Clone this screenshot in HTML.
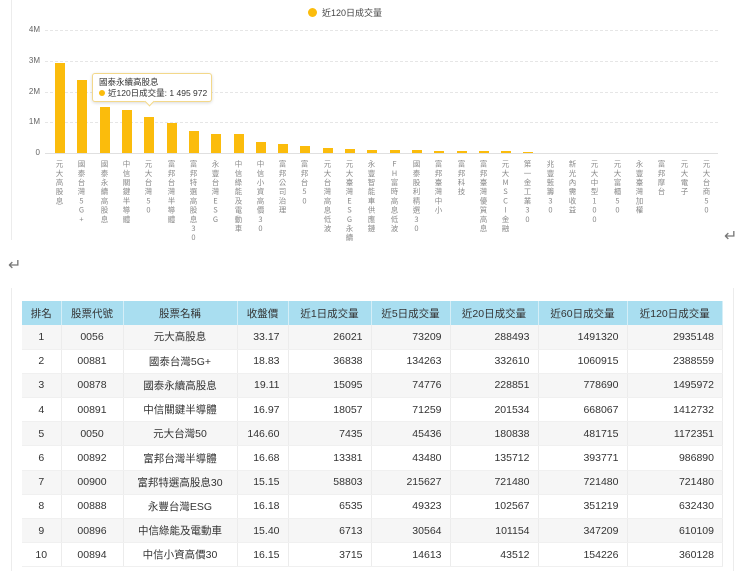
<!DOCTYPE html>
<html><head><meta charset="utf-8"><style>
*{margin:0;padding:0;box-sizing:border-box}
body{width:740px;height:571px;background:#fff;position:relative;overflow:hidden;font-family:"Liberation Sans","Noto Sans CJK TC",sans-serif;color:#333}
.abs{position:absolute}
.yl{position:absolute;left:20px;width:20px;text-align:right;font-size:8px;color:#666}
.gl{position:absolute;left:45px;width:673px;border-top:1px dashed #e6e6e6}
.bar{position:absolute;width:10px;background:#fbbc0c;bottom:418px}
.lab{position:absolute;top:160px;width:10px;font-size:7.5px;letter-spacing:1.7px;color:#8a8a8a;writing-mode:vertical-rl;text-orientation:upright;font-family:"Noto Sans CJK TC","Liberation Sans",sans-serif}
table{position:absolute;left:22px;top:301px;width:701px;border-collapse:collapse;font-size:10.5px}
th{background:#a9def0;height:24px;font-weight:normal;color:#333;border-right:1px solid #d5eef7}
td{height:24.2px;border-right:1px solid #ececec;border-bottom:1px solid #f0f0f0}
tr:nth-child(even) td{background:#f6f6f6}
.c{text-align:center}.r{text-align:right;padding-right:8px}
</style></head><body>
<div class="abs" style="left:11px;top:0;height:240px;border-left:1px solid #ececec"></div>
<div class="abs" style="left:308px;top:8px;width:9px;height:9px;border-radius:50%;background:#fbbc0c"></div>
<div class="abs" style="left:322px;top:6px;font-size:9px;color:#444">近120日成交量</div>
<div class="yl" style="top:25px">4M</div><div class="yl" style="top:56px">3M</div><div class="yl" style="top:87px">2M</div><div class="yl" style="top:117px">1M</div><div class="yl" style="top:148px">0</div>
<div class="gl" style="top:30px"></div><div class="gl" style="top:61px"></div><div class="gl" style="top:92px"></div><div class="gl" style="top:122px"></div>
<div class="abs" style="left:45px;top:153px;width:673px;border-top:1px solid #e0e0e0"></div>
<div class="bar" style="left:55px;height:90px"></div>
<div class="bar" style="left:77px;height:73px"></div>
<div class="bar" style="left:100px;height:46px"></div>
<div class="bar" style="left:122px;height:43px"></div>
<div class="bar" style="left:144px;height:36px"></div>
<div class="bar" style="left:167px;height:30px"></div>
<div class="bar" style="left:189px;height:22px"></div>
<div class="bar" style="left:211px;height:19px"></div>
<div class="bar" style="left:234px;height:19px"></div>
<div class="bar" style="left:256px;height:11px"></div>
<div class="bar" style="left:278px;height:9px"></div>
<div class="bar" style="left:300px;height:7px"></div>
<div class="bar" style="left:323px;height:5px"></div>
<div class="bar" style="left:345px;height:4px"></div>
<div class="bar" style="left:367px;height:3px"></div>
<div class="bar" style="left:390px;height:3px"></div>
<div class="bar" style="left:412px;height:3px"></div>
<div class="bar" style="left:434px;height:2px"></div>
<div class="bar" style="left:457px;height:2px"></div>
<div class="bar" style="left:479px;height:2px"></div>
<div class="bar" style="left:501px;height:2px"></div>
<div class="bar" style="left:523px;height:1px"></div>
<div class="lab" style="left:55px">元大高股息</div>
<div class="lab" style="left:77px">國泰台灣5G+</div>
<div class="lab" style="left:100px">國泰永續高股息</div>
<div class="lab" style="left:122px">中信關鍵半導體</div>
<div class="lab" style="left:144px">元大台灣50</div>
<div class="lab" style="left:167px">富邦台灣半導體</div>
<div class="lab" style="left:189px">富邦特選高股息30</div>
<div class="lab" style="left:211px">永豐台灣ESG</div>
<div class="lab" style="left:234px">中信綠能及電動車</div>
<div class="lab" style="left:256px">中信小資高價30</div>
<div class="lab" style="left:278px">富邦公司治理</div>
<div class="lab" style="left:300px">富邦台50</div>
<div class="lab" style="left:323px">元大台灣高息低波</div>
<div class="lab" style="left:345px">元大臺灣ESG永續</div>
<div class="lab" style="left:367px">永豐智能車供應鏈</div>
<div class="lab" style="left:390px">FH富時高息低波</div>
<div class="lab" style="left:412px">國泰股利精選30</div>
<div class="lab" style="left:434px">富邦臺灣中小</div>
<div class="lab" style="left:457px">富邦科技</div>
<div class="lab" style="left:479px">富邦臺灣優質高息</div>
<div class="lab" style="left:501px">元大MSCI金融</div>
<div class="lab" style="left:523px">第一金工業30</div>
<div class="lab" style="left:546px">兆豐藍籌30</div>
<div class="lab" style="left:568px">新光內需收益</div>
<div class="lab" style="left:590px">元大中型100</div>
<div class="lab" style="left:613px">元大富櫃50</div>
<div class="lab" style="left:635px">永豐臺灣加權</div>
<div class="lab" style="left:657px">富邦摩台</div>
<div class="lab" style="left:680px">元大電子</div>
<div class="lab" style="left:702px">元大台商50</div>
<div class="abs" style="left:92px;top:73px;width:120px;height:29px;background:#fff;border:1px solid #f3d88a;border-radius:3px;box-shadow:0 1px 3px rgba(0,0,0,.15);font-size:8.5px;color:#333;padding:3px 0 0 6px;line-height:11px">國泰永續高股息<br><span style="display:inline-block;width:6px;height:6px;border-radius:50%;background:#fbbc0c;margin-right:3px"></span>近120日成交量: 1 495 972</div>
<div class="abs" style="left:146px;top:98px;width:7px;height:7px;background:#fff;border-right:1px solid #f3d88a;border-bottom:1px solid #f3d88a;transform:rotate(45deg)"></div>
<div class="abs" style="left:724px;top:226px;font-size:16px;color:#777">↵</div>
<div class="abs" style="left:8px;top:255px;font-size:16px;color:#777">↵</div>
<div class="abs" style="left:11px;top:288px;height:283px;border-left:1px solid #ececec"></div>
<div class="abs" style="left:733px;top:288px;height:283px;border-left:1px solid #ececec"></div>
<table>
<tr><th style="width:39px">排名</th><th style="width:62px">股票代號</th><th style="width:114px">股票名稱</th><th style="width:51px">收盤價</th><th style="width:83px">近1日成交量</th><th style="width:79px">近5日成交量</th><th style="width:88px">近20日成交量</th><th style="width:89px">近60日成交量</th><th>近120日成交量</th></tr>
<tr><td class="c">1</td><td class="c">0056</td><td class="c">元大高股息</td><td class="r">33.17</td><td class="r">26021</td><td class="r">73209</td><td class="r">288493</td><td class="r">1491320</td><td class="r">2935148</td></tr>
<tr><td class="c">2</td><td class="c">00881</td><td class="c">國泰台灣5G+</td><td class="r">18.83</td><td class="r">36838</td><td class="r">134263</td><td class="r">332610</td><td class="r">1060915</td><td class="r">2388559</td></tr>
<tr><td class="c">3</td><td class="c">00878</td><td class="c">國泰永續高股息</td><td class="r">19.11</td><td class="r">15095</td><td class="r">74776</td><td class="r">228851</td><td class="r">778690</td><td class="r">1495972</td></tr>
<tr><td class="c">4</td><td class="c">00891</td><td class="c">中信關鍵半導體</td><td class="r">16.97</td><td class="r">18057</td><td class="r">71259</td><td class="r">201534</td><td class="r">668067</td><td class="r">1412732</td></tr>
<tr><td class="c">5</td><td class="c">0050</td><td class="c">元大台灣50</td><td class="r">146.60</td><td class="r">7435</td><td class="r">45436</td><td class="r">180838</td><td class="r">481715</td><td class="r">1172351</td></tr>
<tr><td class="c">6</td><td class="c">00892</td><td class="c">富邦台灣半導體</td><td class="r">16.68</td><td class="r">13381</td><td class="r">43480</td><td class="r">135712</td><td class="r">393771</td><td class="r">986890</td></tr>
<tr><td class="c">7</td><td class="c">00900</td><td class="c">富邦特選高股息30</td><td class="r">15.15</td><td class="r">58803</td><td class="r">215627</td><td class="r">721480</td><td class="r">721480</td><td class="r">721480</td></tr>
<tr><td class="c">8</td><td class="c">00888</td><td class="c">永豐台灣ESG</td><td class="r">16.18</td><td class="r">6535</td><td class="r">49323</td><td class="r">102567</td><td class="r">351219</td><td class="r">632430</td></tr>
<tr><td class="c">9</td><td class="c">00896</td><td class="c">中信綠能及電動車</td><td class="r">15.40</td><td class="r">6713</td><td class="r">30564</td><td class="r">101154</td><td class="r">347209</td><td class="r">610109</td></tr>
<tr><td class="c">10</td><td class="c">00894</td><td class="c">中信小資高價30</td><td class="r">16.15</td><td class="r">3715</td><td class="r">14613</td><td class="r">43512</td><td class="r">154226</td><td class="r">360128</td></tr>
</table>
</body></html>
